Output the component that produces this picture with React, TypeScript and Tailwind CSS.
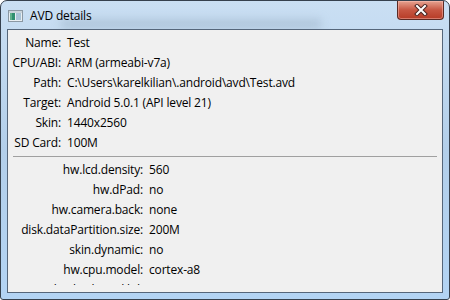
const general = [
  ["Name:", "Test"],
  ["CPU/ABI:", "ARM (armeabi-v7a)"],
  ["Path:", "C:\\Users\\karelkilian\\.android\\avd\\Test.avd"],
  ["Target:", "Android 5.0.1 (API level 21)"],
  ["Skin:", "1440x2560"],
  ["SD Card:", "100M"],
];

const props = [
  ["hw.lcd.density:", "560"],
  ["hw.dPad:", "no"],
  ["hw.camera.back:", "none"],
  ["disk.dataPartition.size:", "200M"],
  ["skin.dynamic:", "no"],
  ["hw.cpu.model:", "cortex-a8"],
  ["hw.keyboard.lid:", "no"],
];

const Row = ({ label, value, labelWidth }: { label: string; value: string; labelWidth: string }) => (
  <div className="flex h-[20px] items-center whitespace-nowrap">
    <div className={`${labelWidth} shrink-0 text-right`}>{label}</div>
    <div className="ml-[6px]">{value}</div>
  </div>
);

export default function App() {
  return (
    <div
      className="w-[450px] h-[300px] text-[12px] tracking-[-0.17px] text-black"
      style={{ fontFamily: '"Open Sans", "Noto Sans", sans-serif' }}
    >
      <div className="relative flex flex-col w-full h-full overflow-hidden rounded-t-[7px] rounded-b-[3px] border border-[#36414e] bg-gradient-to-b from-[#cadff3] via-[#b3cfea] to-[#b3d4f4]">
        {/* blurred background behind the glass */}
        <div className="absolute left-[60px] top-[18px] w-[260px] h-[10px] bg-[#8fa4b9]/40 blur-[4px]" />

        {/* Title bar */}
        <div className="relative h-[28px] flex items-center pl-[7px] shrink-0">
          <svg width="15" height="12" viewBox="0 0 15 12" className="mt-[1px]">
            <rect x="0.5" y="0.5" width="14" height="11" fill="#e8eef2" stroke="#8b98a3" />
            <rect x="1" y="1" width="13" height="2" fill="#c9d3da" />
            <rect x="2" y="3" width="5" height="7" fill="#2f8f6e" />
            <rect x="2" y="3" width="2" height="7" fill="#5fb08a" />
            <rect x="8" y="3" width="5" height="7" fill="#a9c3d6" />
          </svg>
          <span className="ml-[7px] text-[12px] leading-none mt-[1px]">AVD details</span>

          {/* Close button */}
          <div className="absolute right-[5px] top-[0px] w-[47px] h-[19px] rounded-b-[4px] border border-t-0 border-[#5a2a24] bg-gradient-to-b from-[#e6a391] via-[#c75642] to-[#b63b26] flex items-center justify-center shadow-[inset_0_0_0_1px_rgba(255,200,190,0.45)]">
            <svg width="14" height="12" viewBox="0 0 14 12">
              <path d="M3 2 L11 10 M11 2 L3 10" stroke="#4a2420" strokeWidth="4" strokeLinecap="square" />
              <path d="M3 2 L11 10 M11 2 L3 10" stroke="#ffffff" strokeWidth="2" strokeLinecap="square" />
            </svg>
          </div>
        </div>

        {/* Client area */}
        <div className="relative flex-1 mx-[6px] mb-[6px] border border-[#55667a] bg-[#f0f0f0] flex flex-col">
          <div className="pt-[3px]">
            {general.map(([l, v]) => (
              <Row key={l} label={l} value={v} labelWidth="w-[53px]" />
            ))}
          </div>
          <div className="mx-[5px] mt-[3px] h-px bg-[#a0a0a0]" />
          <div className="mt-[3px] h-[125px] overflow-hidden">
            {props.map(([l, v]) => (
              <Row key={l} label={l} value={v} labelWidth="w-[135px]" />
            ))}
          </div>
        </div>
      </div>
    </div>
  );
}
